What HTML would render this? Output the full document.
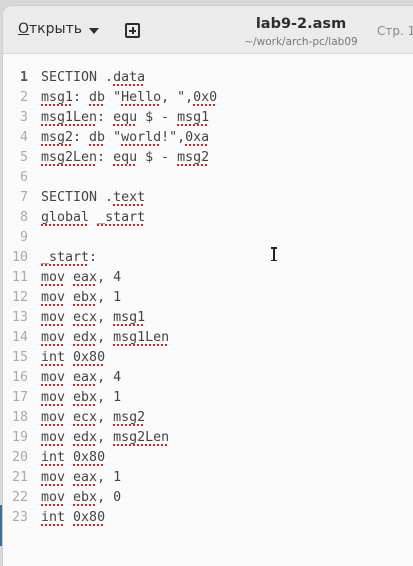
<!DOCTYPE html>
<html><head><meta charset="utf-8"><style>
html,body{margin:0;padding:0;width:413px;height:546px;overflow:hidden;background:#d8d8d8;}
.win{position:absolute;left:2px;top:5px;width:420px;height:560px;background:#fafafa;border-top-left-radius:10px;overflow:hidden;border-left:1px solid #cfcfcf;border-top:1px solid #cfcfcf}
.hdr{position:absolute;left:0;top:0;width:100%;height:47px;background:#ebebeb;border-bottom:1px solid #d6d6d6;font-family:"DejaVu Sans","Liberation Sans",sans-serif;color:#2e2e2e}
.open{position:absolute;left:15px;top:15px;font-size:14px;font-weight:500}
.open u{text-decoration:underline}
.tri{position:absolute;left:86px;top:22px;width:0;height:0;border-left:5px solid transparent;border-right:5px solid transparent;border-top:6px solid #2e2e2e}
.plus{position:absolute;left:122px;top:17px;width:11px;height:11px;border:2px solid #2e2e2e;border-radius:2px}
.plus:before{content:"";position:absolute;left:2px;top:4.5px;width:7px;height:2px;background:#2e2e2e}
.plus:after{content:"";position:absolute;left:4.5px;top:2px;width:2px;height:7px;background:#2e2e2e}
.title{position:absolute;left:198px;top:10px;width:200px;text-align:center;font-size:14.5px;font-weight:bold;white-space:nowrap}
.sub{position:absolute;left:198px;top:30px;width:200px;text-align:center;font-size:10.5px;color:#777;white-space:nowrap}
.str{position:absolute;left:374px;top:18px;font-size:12px;color:#888;white-space:nowrap}
.code{position:absolute;left:0;top:62px;font-family:"DejaVu Sans Mono","Liberation Mono",monospace;font-size:13.3px;line-height:20px;color:#444}
.ln{position:absolute;left:0;width:25px;text-align:right;color:#aaa}
.ln.cur{color:#555;font-weight:bold}
.tx{position:absolute;left:38px;white-space:pre}
.s{text-decoration:underline dotted #d22;text-decoration-thickness:1.5px;text-underline-offset:3px}
.cursor{position:absolute;left:273px;top:247px;width:2px;height:14px;background:#222}
.cursor:before,.cursor:after{content:"";position:absolute;left:-2px;width:6px;height:1.5px;background:#222}
.cursor:before{top:0}.cursor:after{bottom:0}
.blue{position:absolute;left:0;top:505px;width:2px;height:41px;background:#3b6e9c}
</style></head><body>
<div class="blue"></div>
<div class="win">
<div class="hdr">
<div class="open"><u>О</u>ткрыть</div><div class="tri"></div>
<div class="plus"></div>
<div class="title">lab9-2.asm</div>
<div class="sub">~/work/arch-pc/lab09</div>
<div class="str">Стр. 1</div>
</div>
<div class="code">
<div class="ln cur" style="top:0">1</div><div class="tx" style="top:0">SECTION .<span class="s">data</span></div>
<div class="ln" style="top:20px">2</div><div class="tx" style="top:20px"><span class="s">msg1</span>: <span class="s">db</span> "<span class="s">Hello</span>, ",<span class="s">0x0</span></div>
<div class="ln" style="top:40px">3</div><div class="tx" style="top:40px"><span class="s">msg1Len</span>: <span class="s">equ</span> $ - <span class="s">msg1</span></div>
<div class="ln" style="top:60px">4</div><div class="tx" style="top:60px"><span class="s">msg2</span>: <span class="s">db</span> "<span class="s">world</span>!",<span class="s">0xa</span></div>
<div class="ln" style="top:80px">5</div><div class="tx" style="top:80px"><span class="s">msg2Len</span>: <span class="s">equ</span> $ - <span class="s">msg2</span></div>
<div class="ln" style="top:100px">6</div>
<div class="ln" style="top:120px">7</div><div class="tx" style="top:120px">SECTION .<span class="s">text</span></div>
<div class="ln" style="top:140px">8</div><div class="tx" style="top:140px"><span class="s">global</span> <span class="s">_start</span></div>
<div class="ln" style="top:160px">9</div>
<div class="ln" style="top:180px">10</div><div class="tx" style="top:180px"><span class="s">_start</span>:</div>
<div class="ln" style="top:200px">11</div><div class="tx" style="top:200px"><span class="s">mov</span> <span class="s">eax</span>, 4</div>
<div class="ln" style="top:220px">12</div><div class="tx" style="top:220px"><span class="s">mov</span> <span class="s">ebx</span>, 1</div>
<div class="ln" style="top:240px">13</div><div class="tx" style="top:240px"><span class="s">mov</span> <span class="s">ecx</span>, <span class="s">msg1</span></div>
<div class="ln" style="top:260px">14</div><div class="tx" style="top:260px"><span class="s">mov</span> <span class="s">edx</span>, <span class="s">msg1Len</span></div>
<div class="ln" style="top:280px">15</div><div class="tx" style="top:280px"><span class="s">int</span> <span class="s">0x80</span></div>
<div class="ln" style="top:300px">16</div><div class="tx" style="top:300px"><span class="s">mov</span> <span class="s">eax</span>, 4</div>
<div class="ln" style="top:320px">17</div><div class="tx" style="top:320px"><span class="s">mov</span> <span class="s">ebx</span>, 1</div>
<div class="ln" style="top:340px">18</div><div class="tx" style="top:340px"><span class="s">mov</span> <span class="s">ecx</span>, <span class="s">msg2</span></div>
<div class="ln" style="top:360px">19</div><div class="tx" style="top:360px"><span class="s">mov</span> <span class="s">edx</span>, <span class="s">msg2Len</span></div>
<div class="ln" style="top:380px">20</div><div class="tx" style="top:380px"><span class="s">int</span> <span class="s">0x80</span></div>
<div class="ln" style="top:400px">21</div><div class="tx" style="top:400px"><span class="s">mov</span> <span class="s">eax</span>, 1</div>
<div class="ln" style="top:420px">22</div><div class="tx" style="top:420px"><span class="s">mov</span> <span class="s">ebx</span>, 0</div>
<div class="ln" style="top:440px">23</div><div class="tx" style="top:440px"><span class="s">int</span> <span class="s">0x80</span></div>
</div>
</div>
<div class="cursor"></div>
</body></html>
